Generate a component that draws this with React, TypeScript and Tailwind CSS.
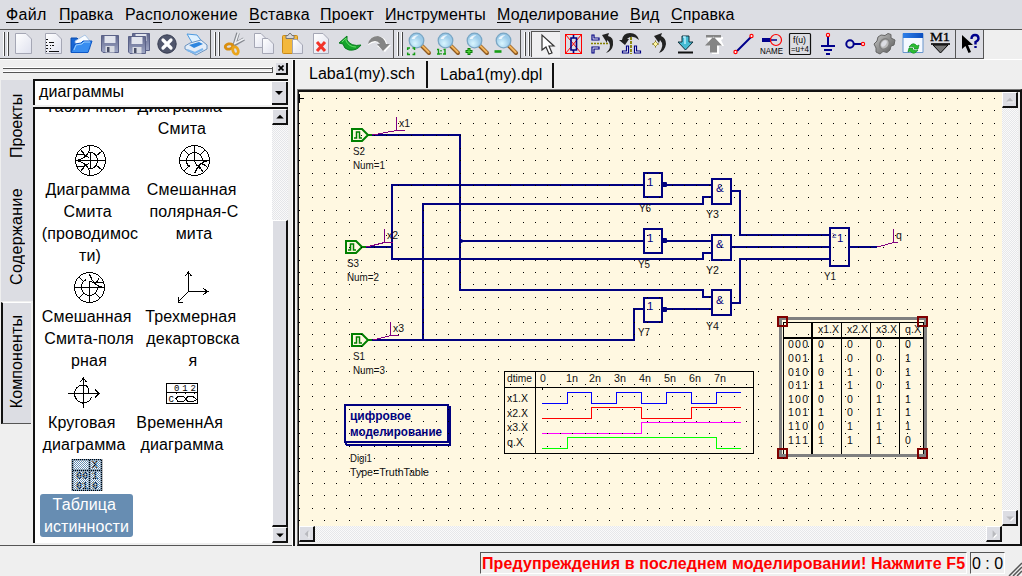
import type { ReactNode } from "react";

const menu: [string, string, string, string][] = [
  ["", "Ф", "айл", "w-[53px] tracking-[0.3px]"],
  ["", "П", "равка", "w-[66px]"],
  ["Рас", "п", "оложение", "w-[124px] tracking-[0.35px]"],
  ["", "В", "ставка", "w-[71px] tracking-[0.2px]"],
  ["", "П", "роект", "w-[65px] tracking-[0.2px]"],
  ["", "И", "нструменты", "w-[112px] tracking-[0.1px]"],
  ["", "М", "оделирование", "w-[133px] tracking-[0.15px]"],
  ["", "В", "ид", "w-[41px] tracking-[0.2px]"],
  ["", "С", "правка", "w-[66px] tracking-[0.1px]"],
];

function Ico({ children }: { children: ReactNode }) {
  return (
    <svg width="24" height="24" viewBox="0 0 24 24" className="block shrink-0 overflow-visible">
      {children}
    </svg>
  );
}

function Slot({ children, on }: { children: ReactNode; on?: boolean }) {
  return (
    <div
      className={
        on
          ? "flex h-[26px] min-w-0 flex-1 items-center justify-center border-t border-l border-[#555] bg-[#efeff1]"
          : "flex h-[26px] min-w-0 flex-1 items-center justify-center"
      }
    >
      {children}
    </div>
  );
}

function Handle() {
  return (
    <div className="flex h-[24px] w-[10px] shrink-0 gap-[2px] pl-[3px]">
      <div className="w-[2px] border-r border-[#444] bg-white" />
      <div className="w-[2px] border-r border-[#444] bg-white" />
    </div>
  );
}

function Group({ w, children }: { w: string; children: ReactNode }) {
  return (
    <div className={`flex h-[30px] shrink-0 items-center border-t border-r border-b border-[#555] pb-px ${w}`}>
      <Handle />
      {children}
    </div>
  );
}

const Page = ({ x = 0, y = 0, w = 16, h = 20 }: { x?: number; y?: number; w?: number; h?: number }) => (
  <g transform={`translate(${x} ${y})`}>
    <path d={`M.5.5H${w - 6}L${w - 0.5} 6V${h - 0.5}H.5Z`} fill="url(#page)" stroke="#a5a7b5" />
    <path d={`M${w - 6}.5V6H${w - 0.5}`} fill="#fff" stroke="#a5a7b5" strokeWidth=".8" />
  </g>
);

const Floppy = ({ x = 0, y = 0 }: { x?: number; y?: number }) => (
  <g transform={`translate(${x} ${y})`}>
    <path d="M.5.5h17v17H2L.5 16Z" fill="url(#flop)" stroke="#5b6288" />
    <path d="M3.500 1h11v7h-11z" fill="#e2e5ee" />
    <path d="M4.500 11h9v6.500h-9z" fill="#d8dbe3" />
    <path d="M6 12h2.500v5H6z" fill="#4a5068" />
  </g>
);

const Lens = ({ children }: { children?: ReactNode }) => (
  <Ico>
    <path d="m15 14 7 7" stroke="#8f5a20" strokeWidth="4" strokeLinecap="round" />
    <path d="m15.500 14 6.200 6.200" stroke="#f2b45c" strokeWidth="2" strokeLinecap="round" />
    <circle cx="9.500" cy="8.500" r="7.300" fill="url(#lens)" stroke="#7aa6c4" strokeWidth="1.300" />
    <path d="M4.500 7q2-4.500 7-3.500-3 .5-4 3.500Z" fill="#fff" opacity=".8" />
    {children}
  </Ico>
);

function ToolBar() {
  return (
    <div className="flex h-[30px] w-full bg-[#dcdde3]">
      <svg width="0" height="0" className="absolute">
        <defs>
          <linearGradient id="page" x2="1" y2="1">
            <stop stopColor="#fff" />
            <stop offset="1" stopColor="#dfe1ee" />
          </linearGradient>
          <linearGradient id="flop" x2="0" y2="1">
            <stop stopColor="#5f668c" />
            <stop offset="1" stopColor="#9ea6c4" />
          </linearGradient>
          <radialGradient id="lens" cx=".4" cy=".7">
            <stop stopColor="#d9f6ff" />
            <stop offset="1" stopColor="#9ccbe9" />
          </radialGradient>
          <linearGradient id="gear" x2="1" y2="1">
            <stop stopColor="#c9c9c9" />
            <stop offset="1" stopColor="#555" />
          </linearGradient>
          <linearGradient id="blue" x2="1" y2="0">
            <stop stopColor="#2f7fe8" />
            <stop offset="1" stopColor="#0c4fc0" />
          </linearGradient>
        </defs>
      </svg>
      <Group w="w-[211px]">
        <Slot><Ico><Page x={3} y={1} w={17} h={21} /></Ico></Slot>
        <Slot>
          <Ico>
            <Page x={4} y={1} w={17} h={21} />
            <path d="M5 7.500h2M5 10.500h1m2 0h5M5 13.500h2m2 0h1m1 0h2M5 16.500h2m2 0h1M5 19.500h1m2 0h10" stroke="#111" strokeWidth="1.200" />
          </Ico>
        </Slot>
        <Slot>
          <Ico>
            <path d="M2 20V6h6l2 2h9v12Z" fill="#1766d5" stroke="#0d4dae" />
            <path d="M6 9 16 3l5 6v8H7Z" fill="#f8fbff" stroke="#8fb4e0" strokeWidth=".7" />
            <path d="M2 20.500 6 12l6-1 2-2h9l-4 11.500Z" fill="#388df0" stroke="#0d57c6" />
            <path d="m5 18 2-5 6-1 2-2h6" fill="none" stroke="#9bd0ff" />
          </Ico>
        </Slot>
        <Slot><Ico><Floppy x={3} y={3} /></Ico></Slot>
        <Slot><Ico><Floppy x={5} y={1} /><Floppy x={1} y={4} /></Ico></Slot>
        <Slot>
          <Ico>
            <circle cx="12" cy="12" r="9.200" fill="#50566c" stroke="#363b50" />
            <path d="m8 8 8 8m0-8-8 8" stroke="#fff" strokeWidth="3.200" strokeLinecap="round" />
          </Ico>
        </Slot>
        <Slot>
          <Ico>
            <path d="m3 2 10 1 6 8-9 3Z" fill="#dff1ff" stroke="#4d9ae0" />
            <path d="m1 14 5-3 11-3 6 5v4L12 23 1 17Z" fill="#e4edf8" stroke="#6b93c0" />
            <path d="m5 13 10-3 4 2-9 4Z" fill="#2e86df" />
            <path d="m3 18 8 3 8-4" fill="none" stroke="#7cb6ee" strokeWidth="2" />
          </Ico>
        </Slot>
      </Group>
      <Group w="w-[183px]">
        <Slot>
          <Ico>
            <path d="m15 1-4 13M21 7 9 14" stroke="#85888f" strokeWidth="3.600" />
            <path d="m15.300 1-3.600 11M21 6.800 11 12" stroke="#eef0f4" strokeWidth="1.600" />
            <ellipse cx="6" cy="14.500" rx="3.800" ry="2.600" fill="none" stroke="#d98e10" strokeWidth="2.800" transform="rotate(-12 6 14.500)" />
            <ellipse cx="12.500" cy="18.500" rx="2.600" ry="3.800" fill="none" stroke="#eaa51c" strokeWidth="2.800" transform="rotate(-20 12.500 18.500)" />
          </Ico>
        </Slot>
        <Slot><Ico><Page x={2} y={1} w={13} h={15} /><Page x={10} y={6} w={12} h={16} /></Ico></Slot>
        <Slot>
          <Ico>
            <rect x="1.500" y="3.500" width="15" height="18" rx="1" fill="#f3b83c" stroke="#c98a18" />
            <path d="M5 3.500h2q2-4.500 4 0h2v3H5Z" fill="#d5d6dc" stroke="#777" />
            <Page x={11} y={7} w={11} h={15} />
          </Ico>
        </Slot>
        <Slot>
          <Ico>
            <Page x={4} y={1} w={16} h={21} />
            <path d="m8 10 8 9m0-9-8 9" stroke="#f2342a" strokeWidth="3" />
          </Ico>
        </Slot>
        <Slot>
          <Ico>
            <path d="m1 11 8-7v4q4 7 14 5-4 6-12 5-5-1-6-6Z" fill="#16a52b" stroke="#0a7a20" />
            <path d="m4 10 4-4v3q3 6 10 6" fill="none" stroke="#65dc68" />
          </Ico>
        </Slot>
        <Slot>
          <Ico>
            <path d="m24 13-6 7-8-6h4q-3-7-13-1 1-9 10-9 8 1 9 8Z" fill="#fff" />
            <path d="m23 12-7 7-6-7h3q-4-6-12 0 2-8 10-8 6 1 8 8Z" fill="#858585" />
          </Ico>
        </Slot>
      </Group>
      <Group w="w-[127px]">
        <Slot><Lens><path d="M.7 18v-2H3m2.500 0h2v2m0 2.500v2h-2m-2.500 0H.7v-2" fill="none" stroke="#129b12" strokeWidth="1.500" /></Lens></Slot>
        <Slot><Lens><path d="M1 17.500h1.500V22M7.500 17.500H9V22M5 18v1.500m0 1.500v1.500M1 22h3m3 0h3" fill="none" stroke="#129b12" strokeWidth="1.400" /></Lens></Slot>
        <Slot><Lens><path d="M4 16v7M.5 19.500h7" stroke="#087e08" strokeWidth="3" /><path d="M4 17v5M1.500 19.500h5" stroke="#54d33e" strokeWidth="1.200" /></Lens></Slot>
        <Slot><Lens><path d="M.5 19.500h7" stroke="#179d17" strokeWidth="2.600" /></Lens></Slot>
      </Group>
      <Group w="w-[435px]">
        <Slot on><Ico><path d="M8 3v15l4-3 3 7 3-1-3-7h5Z" fill="#fff" stroke="#333" strokeWidth="1.200" /></Ico></Slot>
        <Slot>
          <Ico>
            <path d="M3.500 2.500h16v19h-16z" fill="none" stroke="#f00" shapeRendering="crispEdges" />
            <path d="m3.500 2.500 16 19M19.500 2.500l-16 19" fill="none" stroke="#f00" />
            <path d="M11.500 3v3m0 12v3" stroke="#000080" strokeWidth="1.600" />
            <path d="M9 6h5.500v12H9z" fill="none" stroke="#000080" strokeWidth="1.600" />
          </Ico>
        </Slot>
        <Slot>
          <Ico>
            <path d="M1 3h2v3h5v2H1Zm0 18h2v-4h5v-2H1Z" fill="#fff" stroke="#000080" strokeWidth="1.200" />
            <path d="M0 11.500h17" stroke="#858000" strokeWidth="1.700" strokeDasharray="2 1" />
            <path d="m11 3 7-2-1 3q6 1 5 9-1 6-7 8 6-5 3-11l-2-2v3Z" fill="#222" />
          </Ico>
        </Slot>
        <Slot>
          <Ico>
            <path d="M12 5v17" stroke="#858000" strokeWidth="1.800" strokeDasharray="3 1" />
            <path d="M7.500 14v5h-4v2h6v-7Zm8 0v7h6v-2h-4v-5Z" fill="#fff" stroke="#000080" strokeWidth="1.200" />
            <path d="m0 8 6 5 4-6H8q5-5 12 1-2-7-9-7Q4 1 3 8Z" fill="#222" />
          </Ico>
        </Slot>
        <Slot>
          <Ico>
            <path d="m7 4 8-3-1 3q5 2 5 8-1 7-7 9 6-8 1-13l-1 3Z" fill="#222" />
            <path d="M8.500 8.500v7M5 12h7" stroke="#776910" />
            <path d="m8.500 9.500 2.500 2.500-2.500 2.500L6 12Z" fill="#fff6a0" stroke="#776910" strokeWidth=".6" />
          </Ico>
        </Slot>
        <Slot>
          <Ico>
            <path d="M7 4h7v6h4l-7.500 8L3 10h4Z" fill="#44bbd3" stroke="#10323f" />
            <path d="M8 5h2v7" fill="none" stroke="#b9f0ff" strokeWidth="1.500" />
            <path d="M3 20.500h15" stroke="#111" strokeWidth="2" />
          </Ico>
        </Slot>
        <Slot>
          <Ico>
            <path d="M4 5h16v2l-2 1 3 6h-5v8H9" fill="#fff" />
            <path d="M3 3h15v2.500H3zM10.500 4.500 2 13.500h5v7h7v-7h5Z" fill="#858585" />
          </Ico>
        </Slot>
        <Slot>
          <Ico>
            <path d="M5 19 19 5" stroke="#00008c" strokeWidth="2" />
            <circle cx="3.500" cy="20" r="1.600" fill="#fff" stroke="#f00" strokeWidth="1.200" />
            <circle cx="19.500" cy="4" r="1.600" fill="#fff" stroke="#f00" strokeWidth="1.200" />
          </Ico>
        </Slot>
        <Slot>
          <Ico>
            <path d="M2 8h15" stroke="#00008c" strokeWidth="1.500" />
            <path d="M2 8h9" stroke="#00008c" strokeWidth="4" />
            <circle cx="16" cy="8" r="5.500" fill="none" stroke="#f00" strokeWidth="1.200" />
            <text x="0" y="22" fontSize="8.500" textLength="23" lengthAdjust="spacingAndGlyphs" fontFamily="Liberation Sans">NAME</text>
          </Ico>
        </Slot>
        <Slot>
          <Ico>
            <rect x="1.500" y="1.500" width="21" height="21" rx="1" fill="none" stroke="#111" strokeWidth="1.200" />
            <text x="5" y="11" fontSize="8.500" textLength="13" lengthAdjust="spacingAndGlyphs" fontFamily="Liberation Sans">f(u)</text>
            <text x="3" y="20" fontSize="8.500" textLength="18" lengthAdjust="spacingAndGlyphs" fontFamily="Liberation Sans">=u+4</text>
          </Ico>
        </Slot>
        <Slot>
          <Ico>
            <path d="M12 5v9M5 14h14M8 18h8m-6 4h4" stroke="#00008c" strokeWidth="2" />
            <circle cx="12" cy="3" r="1.600" fill="#fff" stroke="#f00" strokeWidth="1.200" />
          </Ico>
        </Slot>
        <Slot>
          <Ico>
            <circle cx="6" cy="12" r="3.700" fill="none" stroke="#00008c" strokeWidth="2" />
            <path d="M10 12h7" stroke="#00008c" strokeWidth="2" />
            <circle cx="19" cy="12" r="1.600" fill="#fff" stroke="#f00" strokeWidth="1.200" />
          </Ico>
        </Slot>
        <Slot>
          <Ico>
            <path d="m8 3 4 .5 3-2 3 1v3.500l4 2-1 5-3 1-1 4-3 2.500-4-1-3 2.500-4-2v-4l-2-4 3-3 1-4Z" fill="url(#gear)" stroke="#666" />
            <ellipse cx="11.500" cy="12" rx="4.500" ry="5.500" fill="#bbb" stroke="#808080" strokeWidth="1.500" transform="rotate(35 11.500 12)" />
            <ellipse cx="11" cy="11.500" rx="2.200" ry="3.600" fill="#dcdde3" transform="rotate(35 11 11.500)" />
          </Ico>
        </Slot>
        <Slot>
          <Ico>
            <path d="M2 1.500h20v19H2z" fill="#f4f8ff" stroke="#6996cc" />
            <path d="M2 1h20v5H2z" fill="url(#blue)" />
            <path d="M8 15q4-6 8-1l2-1-1 4h-4l1-1q-3-3-6-1m9 3q-4 6-8 1l-2 1 1-4h4l-1 1q3 3 6 1" fill="#2abf32" stroke="#0c8a1c" strokeWidth=".7" />
          </Ico>
        </Slot>
        <Slot>
          <Ico>
            <text x="1" y="9" fontSize="13.500" textLength="20" lengthAdjust="spacingAndGlyphs" stroke="#000" strokeWidth=".3" fontFamily="Liberation Serif">M1</text>
            <path d="M4 13h15l-7.500 8Z" fill="#777" stroke="#000" />
            <path d="M2 12h19" stroke="#000" strokeWidth="1.600" />
          </Ico>
        </Slot>
      </Group>
      <div className="flex h-[30px] w-[28px] items-center justify-center border-y border-r border-[#555] border-l-white pb-px">
        <Ico>
          <path d="M4 3v14l3.500-3 3 7 2.500-1-3-7h5Z" fill="#000" />
          <path d="M13.500 7q0-4 3.500-4t3.500 3.500q0 2-3 3.500v2.500m0 1.500v2" fill="none" stroke="#00008c" strokeWidth="2.400" />
        </Ico>
      </div>
      <div className="flex-1 border-t border-[#555] bg-[#efefef]" />
    </div>
  );
}

function Btn({ dir, dim }: { dir: "up" | "down" | "left" | "right"; dim?: boolean }) {
  const d = { up: "M3.500 9h8l-4-4Z", down: "M3.500 6h8l-4 4Z", left: "M9 3.500v8l-4-4Z", right: "M6 3.500v8l4-4Z" }[dir];
  return (
    <div className="h-[16px] w-[16px] shrink-0 border-t border-r-2 border-b-2 border-l border-t-white border-r-[#111] border-b-[#111] border-l-white bg-[#dcdde3]">
      <svg width="14" height="14" viewBox="0 0 15 15">
        {dim && <path d={d} fill="#fff" transform="translate(1 1)" />}
        <path d={d} fill={dim ? "#b8b9be" : "#000"} />
      </svg>
    </div>
  );
}

function Smith({ kind }: { kind: 0 | 1 | 2 }) {
  return (
    <svg width="32" height="32" viewBox="0 0 32 32" fill="none" stroke="#000" shapeRendering="crispEdges">
      <circle cx="16.500" cy="16.500" r="15" />
      <path d="M1.500 16.500h30" />
      {kind === 0 && (
        <>
          <path d="M16.500 8.500v16M1.500 16.500q10-1 14-10V2M1.500 16.500q10 1 14 10v5" />
          <path d="M3 11q7-2 12 3M3 22q7 2 12-3M15 8q5 0 7 4 3 4 0 9-2 4-7 4M22 12l6-5M22 21l6 5M6 5l5 6M6 28l5-6" />
        </>
      )}
      {kind === 1 && (
        <>
          <path d="M16.500 1.500v15M8.500 16.500a8 8 0 0 1 16 0M8.500 16.500q0 5 4 7M6 6l5 5m16-5-5 5M6 27l6-6M31.500 16.500q-10 0-15 13M16.500 16.500q1 6 7 7M22 19q4 1 7 4M19 23q4 1 6 5" />
        </>
      )}
      {kind === 2 && (
        <>
          <path d="M16.500 16.500v15M8.500 16.500a8 8 0 0 0 16 0M8.500 16.500q0-6 5-8M6 27l5-5m16 5-5-5M6 6l5 5M31.500 16.500q-10 0-15-13M16.500 16.500v-6q4 0 7 4M21 13q3-1 5-6M24 11q3 0 6 1" />
        </>
      )}
    </svg>
  );
}

const Axes3D = () => (
  <svg width="32" height="32" viewBox="0 0 32 32" fill="none" stroke="#000" shapeRendering="crispEdges">
    <path d="M11.500 20.500V1m-3 4 3-4 3 4M11.500 20.500H31m-5-3 5 3-5 3M11.500 20.500 1 31m0-5v5h5" />
  </svg>
);

const Locus = () => (
  <svg width="34" height="32" viewBox="0 0 34 32" fill="none" stroke="#000" shapeRendering="crispEdges">
    <path d="M1 16.500h31m-4-4 4 4-4 4M16.500 31V1m-3 4 3-4 3 4" />
    <path d="M21.500 16V12q-1-4-6-4-7 1-8 8 0 8 8 10 7 0 9-6" />
  </svg>
);

const TimingIcon = () => (
  <svg width="32" height="32" viewBox="0 0 32 32" fill="none" stroke="#000" shapeRendering="crispEdges">
    <path d="M.5 6.500h31v20H.5zM.5 15.500h31M10 21.500l2-2h5l3 2 2-2h5l4 3-4 2h-5l-2-2-3 2h-5zM10 15v2m9-2v2m9-2v2" />
    <text x="8" y="14" fontSize="9" fill="#000" stroke="none" textLength="22" fontFamily="Liberation Mono">012</text>
    <text x="2.500" y="25" fontSize="9" fill="#000" stroke="none" fontFamily="Liberation Mono">C</text>
  </svg>
);

const TruthIcon = () => (
  <svg width="32" height="32" viewBox="0 0 32 32">
    <defs>
      <pattern id="chk" width="2" height="2" patternUnits="userSpaceOnUse">
        <path d="M0 0h1v1H0zM1 1h1v1H1z" fill="#678db2" shapeRendering="crispEdges" />
      </pattern>
    </defs>
    <path d="M1.500.5h29v31h-29zM1 11.500h30M18.500 0v32" fill="none" stroke="#000" strokeWidth="1.500" />
    <g fontFamily="Liberation Mono" fontSize="10" fontWeight="700">
      <text x="5" y="20">00</text>
      <text x="21" y="20">1</text>
      <text x="5" y="30">01</text>
      <text x="21" y="30">0</text>
      <text x="21" y="9">X</text>
    </g>
    <path d="M1 0h30v32H1z" fill="url(#chk)" />
  </svg>
);

function Item({ icon, lines, cls }: { icon?: ReactNode; lines: string[]; cls: string }) {
  return (
    <div className={`flex shrink-0 flex-col items-center ${cls}`}>
      {icon && <div className="mb-[3px] h-[32px]">{icon}</div>}
      {lines.map((l) => (
        <div key={l} className="h-[22px] text-[16px] leading-[22px] tracking-[0.15px] whitespace-pre">{l}</div>
      ))}
    </div>
  );
}

function Dock() {
  return (
    <div className="flex h-[486px] w-[292px] shrink-0 flex-col border-b border-[#555]">
      <div className="flex h-[20px] items-center gap-[3px] pb-[3px] pl-[3px]">
        <div className="mt-[3px] flex w-[270px] flex-col gap-[2px] border-r border-[#555]">
          <div className="h-[2px] border-b border-[#555] bg-white" />
          <div className="h-[2px] border-b border-[#555] bg-white" />
        </div>
        <div className="flex h-[12px] w-[12px] items-center justify-center border-r-2 border-b-2 border-[#111] bg-[#dcdde3]">
          <svg width="6" height="6" viewBox="0 0 6 6"><path d="m.5.5 5 5m0-5-5 5" stroke="#000" strokeWidth="1.700" /></svg>
        </div>
      </div>
      <div className="flex min-h-0 flex-1">
        <div className="flex w-[33px] shrink-0 flex-col pl-px">
          <div className="flex h-[221px] w-[32px] flex-col items-center bg-[#dcdde3] text-[16px]">
            <div className="mt-[13px] h-[66px] rotate-180 text-center leading-[28px] [writing-mode:vertical-rl]">Проекты</div>
            <div className="mt-[27px] h-[100px] rotate-180 text-center leading-[28px] tracking-[0.35px] [writing-mode:vertical-rl]">Содержание</div>
          </div>
          <div className="mt-px flex h-[122px] w-[30px] items-center justify-center border-t border-b border-l-2 border-t-white border-b-[#555] border-l-[#111] bg-[#dcdde3]">
            <div className="rotate-180 pt-[3px] text-[16px] leading-[26px] tracking-[0.1px] [writing-mode:vertical-rl]">Компоненты</div>
          </div>
        </div>
        <div className="flex w-[255px] flex-col pb-[2px]">
          <div className="-mt-px flex h-[26px] justify-between border-t-2 border-l-2 border-[#111] bg-white pl-[4px] text-[16px]">
            <div className="leading-[22px] tracking-[0.1px]">диаграммы</div>
            <div className="mt-px flex h-[23px] w-[16px] items-center justify-center border-r-2 border-b-2 border-[#111] bg-[#dcdde3]">
              <svg width="8" height="4"><path d="M0 0h8L4 4Z" /></svg>
            </div>
          </div>
          <div className="mt-[2px] flex min-h-0 flex-1 overflow-hidden border-t-2 border-l-2 border-[#111] bg-white">
            <div className="w-[237px] overflow-hidden">
              <div className="-mt-[13px] flex h-[48px]">
                <Item cls="ml-px w-[104px]" lines={["Табличная "]} />
                <Item cls="w-[84px]" lines={["Диаграмма ", "Смита"]} />
              </div>
              <div className="flex h-[127px]">
                <Item cls="ml-[3px] w-[104px]" icon={<Smith kind={0} />} lines={["Диаграмма ", "Смита ", "(проводимос", "ти)"]} />
                <Item cls="w-[104px]" icon={<Smith kind={1} />} lines={["Смешанная ", "полярная-С", "мита"]} />
              </div>
              <div className="flex h-[106px]">
                <Item cls="ml-[2px] w-[104px]" icon={<Smith kind={2} />} lines={["Смешанная ", "Смита-поля", "рная"]} />
                <Item cls="w-[104px]" icon={<Axes3D />} lines={["Трехмерная ", "декартовска", "я"]} />
              </div>
              <div className="flex h-[82px]">
                <Item cls="ml-px w-[96px]" icon={<Locus />} lines={["Круговая ", "диаграмма"]} />
                <Item cls="w-[100px]" icon={<TimingIcon />} lines={["ВременнАя ", "диаграмма"]} />
              </div>
              <div className="ml-[5px] flex w-[93px] flex-col items-center">
                <TruthIcon />
                <div className="mt-[3px] h-[43px] w-[93px] rounded-[3px] bg-[#678db2] text-center text-[16px] leading-[22px] tracking-[0.1px] text-white">
                  <div className="h-[22px] whitespace-pre">Таблица </div>
                  <div className="h-[21px]">истинности</div>
                </div>
              </div>
            </div>
            <div className="flex w-[16px] flex-col bg-[repeating-conic-gradient(#e4e5e9_0_25%,#fafafa_0_50%)] bg-[length:2px_2px]">
              <Btn dir="up" />
              <div className="h-[95px]" />
              <div className="flex-1 border-t border-r-2 border-b-2 border-l border-t-white border-r-[#111] border-b-[#111] border-l-white bg-[#dcdde3]" />
              <Btn dir="down" />
            </div>
          </div>
        </div>
      </div>
    </div>
  );
}

const dotXs = Array.from({ length: 57 }, (_, i) => Math.round(299.1 + i * 12.415));
const dotYs = Array.from({ length: 35 }, (_, i) => Math.round(98.05 + i * 12.42));

function T({ x, y, w, children, ...rest }: { x: number; y: number; w?: number; children: string; fill?: string; fontWeight?: number; fontSize?: number }) {
  return <text x={x} y={y} textLength={w} lengthAdjust={w ? "spacingAndGlyphs" : undefined} {...rest}>{children}</text>;
}

const sources = [
  { x: 0, y: 0, name: "S2", num: "Num=1" },
  { x: -6, y: 112, name: "S3", num: "Num=2" },
  { x: 0, y: 205, name: "S1", num: "Num=3" },
];
const probes = [
  { x: 396.5, y: 130.5, dx: -24, len: 8, t: "x1", tx: 399 },
  { x: 384.5, y: 242.5, dx: -18, len: 8, t: "x2", tx: 387 },
  { x: 390.5, y: 335.5, dx: -17, len: 8, t: "x3", tx: 393 },
  { x: 893.5, y: 242.5, dx: -16, len: 4, t: "q", tx: 896 },
];
const truth = [
  ["000", "0", "0", "0", "0"],
  ["001", "1", "0", "0", "1"],
  ["010", "0", "1", "0", "1"],
  ["011", "1", "1", "0", "1"],
  ["100", "0", "0", "1", "1"],
  ["101", "1", "0", "1", "1"],
  ["110", "0", "1", "1", "1"],
  ["111", "1", "1", "1", "0"],
];
const truthY = [348, 362, 376, 389, 403, 416, 430, 444];

function Schematic() {
  return (
    <svg width="703" height="434" viewBox="299 92 703 434" className="block shrink-0 bg-[#fff8e1]" fontFamily="Liberation Sans" fontSize="10.500" fill="#111">
      <g fill="none" stroke="#000080" strokeWidth="2" shapeRendering="crispEdges">
        <path d="M371 135H460V290H703V297H712M460 241H643M366 247H393M643 185H392V259H703V253H712M371 340H634V309H643M423 341V204H703V197H712" />
        <path d="M663 185H712M663 241H712M663 309H712M732 191H740V235H830M732 247H830M732 303H740V259H830M850 247H877" />
        <path d="M644 173h18v24h-18zM644 229h18v24h-18zM644 298h18v24h-18zM712 179h19v25h-19zM712 235h19v25h-19zM712 290h19v25h-19zM830 228h19v38h-19z" />
        <path d="M345 405h103v37h-103zM448 407h2v38H347l-2-3" />
      </g>
      <g fill="#000080">
        {[184.5, 240.5, 309.5].map((y) => <rect key={y} x="662" y={y - 2.5} width="5" height="5" rx="1" />)}
        <circle cx="461" cy="241" r="2" />
      </g>
      {sources.map((s) => (
        <g key={s.name} transform={`translate(${s.x} ${s.y})`}>
          <path d="M352 129h10l6 6-6 6h-10ZM368 135h4" fill="none" stroke="#008000" strokeWidth="2" />
          <path d="M354 138h2.500v-6h3v6h2.500" fill="none" stroke="#008000" strokeWidth="1.500" />
          <T x={353} y={155} w={12}>{s.name}</T>
          <T x={353} y={169} w={32}>{s.num}</T>
        </g>
      ))}
      {probes.map((p) => (
        <g key={p.t}>
          <path d={`M${p.x} ${p.y - 13.5}v13.500h${p.len}M${p.x} ${p.y}l${p.dx} 4.500`} fill="none" stroke="#800080" shapeRendering="crispEdges" />
          <T x={p.tx} y={p.y - 3.5}>{p.t}</T>
        </g>
      ))}
      <T x={639} y={212} w={12}>Y6</T>
      <T x={706} y={218} w={13}>Y3</T>
      <T x={638} y={268} w={12}>Y5</T>
      <T x={706} y={274} w={13}>Y2</T>
      <T x={638} y={336} w={12}>Y7</T>
      <T x={706} y={330} w={13}>Y4</T>
      <T x={824} y={280} w={12}>Y1</T>
      <g fill="#000080">
        <T x={647} y={186} fontSize={11.5}>1</T>
        <T x={647} y={242} fontSize={11.5}>1</T>
        <T x={647} y={310} fontSize={11.5}>1</T>
        <T x={716} y={192} fontSize={11.5}>&amp;</T>
        <T x={716} y={248} fontSize={11.5}>&amp;</T>
        <T x={716} y={304} fontSize={11.5}>&amp;</T>
        <T x={832} y={238} fontSize={8}>≥</T>
        <T x={837} y={242} fontSize={11.5}>1</T>
        <T x={350} y={419.5} w={61} fontWeight={700} fontSize={12}>цифровое</T>
        <T x={350} y={436} w={92} fontWeight={700} fontSize={12}>моделирование</T>
      </g>
      <T x={350} y={462} w={22}>Digi1</T>
      <T x={350} y={476} w={79}>Type=TruthTable</T>

      <g fill="none" stroke="#000" shapeRendering="crispEdges">
        <path d="M504.500 371.500h249v82h-249zM535.500 371.500v82M504.500 387.500h249M542.500 387v3" />
        <path d="M542 403.500H567.500V392.500H591.500V403.500H616.500V392.500H641.500V403.500H666.500V392.500H691.500V403.500H716.500V392.500H741" stroke="#00f" />
        <path d="M542 418.500H591.500V407.500H641.500V418.500H691.500V407.500H741" stroke="#f00" />
        <path d="M542 433.500H641.500V422.500H741" stroke="#f0f" />
        <path d="M542 448.500H567.500V437.500H716.500V448.500H741" stroke="#0f0" />
      </g>
      <T x={507} y={382} w={25}>dtime</T>
      <T x={540} y={382}>0</T>
      {[566, 589, 614, 639, 664, 689, 714].map((x, i) => <T key={x} x={x} y={382} w={12}>{`${i + 1}n`}</T>)}
      <T x={507} y={402} w={21}>x1.X</T>
      <T x={507} y={417} w={21}>x2.X</T>
      <T x={507} y={431} w={21}>x3.X</T>
      <T x={507} y={446} w={16}>q.X</T>

      <g fill="none" shapeRendering="crispEdges">
        <path d="M780.500 318.500h145v137h-145z" stroke="#808080" strokeWidth="3" />
        <path d="M783.500 454V322.500h140V454M841.500 322v132M870.500 322v132M899.500 322v132" stroke="#000" />
        <path d="M783 338h141M812 322v132" stroke="#000" strokeWidth="2" />
        <path d="M778 317h9v9h-9zM918 317h9v9h-9zM778 449h9v9h-9zM918 449h9v9h-9z" stroke="#800000" strokeWidth="2" />
      </g>
      <T x={818} y={333} w={21}>x1.X</T>
      <T x={847} y={333} w={21}>x2.X</T>
      <T x={876} y={333} w={21}>x3.X</T>
      <T x={905} y={333} w={16}>q.X</T>
      {truth.map((r, i) => (
        <g key={r[0]}>
          <text x="788" y={truthY[i]} textLength="20">{r[0]}</text>
          {r.slice(1).map((v, j) => <T key={j} x={818 + j * 29} y={truthY[i]}>{v}</T>)}
        </g>
      ))}
      <g fill="#000" shapeRendering="crispEdges">
        {dotYs.map((y) => dotXs.map((x) => <rect key={`${x}-${y}`} x={x} y={y} width="1" height="1" />))}
        <path d="M299 94h1v9h-1zM299 98h5v1h-5z" />
      </g>
    </svg>
  );
}

export default function App() {
  return (
    <div className="flex h-[576px] w-[1022px] flex-col overflow-hidden bg-[#efefef] font-['Liberation_Sans',sans-serif] text-black">
      <div className="flex h-[29px] shrink-0 items-center bg-[#dcdde3] pl-[6px] text-[16px] leading-[29px]">
        {menu.map(([a, u, b, w]) => (
          <div key={u + b} className={`shrink-0 whitespace-nowrap ${w}`}>
            {a}<span className="underline underline-offset-2">{u}</span>{b}
          </div>
        ))}
      </div>
      <ToolBar />
      <div className="flex h-[487px] shrink-0 border-t border-white">
        <Dock />
        <div className="w-[3px] shrink-0 border-r-2 border-[#111] bg-white" />
        <div className="flex w-[727px] flex-col pl-[2px]">
          <div className="flex h-[29px] text-[16px]">
            <div className="my-px w-[131px] border-r-2 border-[#111] pl-[12px] leading-[26px]">Laba1(my).sch</div>
            <div className="mt-[3px] mb-px w-[126px] border-r-2 border-[#111] pl-[12px] leading-[24px]">Laba1(my).dpl</div>
          </div>
          <div className="flex h-[457px] border-t border-l border-r-2 border-b-2 border-t-[#777] border-r-[#111] border-b-[#111] border-l-[#777] bg-[#efefef]">
            <div className="flex w-[722px] flex-col border-t-2 border-l border-[#111]">
              <div className="flex h-[434px]">
                <Schematic />
                <div className="flex w-[16px] flex-col justify-between bg-[repeating-conic-gradient(#e6e7ea_0_25%,#fafafa_0_50%)] bg-[length:2px_2px]">
                  <Btn dir="up" dim />
                  <Btn dir="down" dim />
                </div>
              </div>
              <div className="flex h-[16px] w-[703px] justify-between bg-[repeating-conic-gradient(#e6e7ea_0_25%,#fafafa_0_50%)] bg-[length:2px_2px]">
                <Btn dir="left" dim />
                <Btn dir="right" dim />
              </div>
            </div>
          </div>
        </div>
      </div>
      <div className="flex min-h-0 flex-1 justify-end pt-[6px]">
        <div className="h-[22px] w-[487px] border-t border-r border-b border-l border-t-[#555] border-r-white border-b-white border-l-[#555] pl-px text-[16px] leading-[21px] font-bold tracking-[0.1px] whitespace-nowrap text-[#f00]">
          Предупреждения в последнем моделировании! Нажмите F5
        </div>
        <div className="ml-[3px] h-[22px] w-[35px] border border-t-[#555] border-r-white border-b-white border-l-[#555] pl-px text-[16px] leading-[21px] whitespace-nowrap">0 : 0</div>
        <svg width="17" height="24" viewBox="0 0 17 24" className="shrink-0">
          <path d="M4 24 17 11M8 24l9-9M12 24l5-5" stroke="#555" strokeWidth="1.500" />
        </svg>
      </div>
    </div>
  );
}
